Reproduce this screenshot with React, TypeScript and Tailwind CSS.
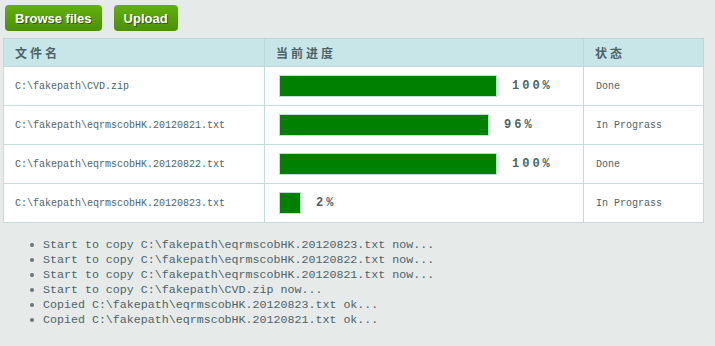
import React from "react";

const rows = [
  { name: "C:\\fakepath\\CVD.zip", w: 218, pct: "100%", status: "Done" },
  { name: "C:\\fakepath\\eqrmscobHK.20120821.txt", w: 210, pct: "96%", status: "In Prograss" },
  { name: "C:\\fakepath\\eqrmscobHK.20120822.txt", w: 218, pct: "100%", status: "Done" },
  { name: "C:\\fakepath\\eqrmscobHK.20120823.txt", w: 22, pct: "2%", status: "In Prograss" },
];

const logs = [
  "Start to copy C:\\fakepath\\eqrmscobHK.20120823.txt now...",
  "Start to copy C:\\fakepath\\eqrmscobHK.20120822.txt now...",
  "Start to copy C:\\fakepath\\eqrmscobHK.20120821.txt now...",
  "Start to copy C:\\fakepath\\CVD.zip now...",
  "Copied C:\\fakepath\\eqrmscobHK.20120823.txt ok...",
  "Copied C:\\fakepath\\eqrmscobHK.20120821.txt ok...",
];

function Btn({ children }: { children: React.ReactNode }) {
  return (
    <button className="h-[26px] px-[10px] rounded-[4px] bg-gradient-to-b from-[#62b010] to-[#4a9200] text-white font-bold text-[13px] [font-family:'Liberation_Sans',Arial,sans-serif] [text-shadow:1px_1px_0_#2f5a00] leading-none">
      {children}
    </button>
  );
}

export default function App() {
  return (
    <div className="w-[715px] h-[346px] bg-[#e6eae8] text-[#4d6468] [font-family:'Liberation_Mono',monospace] overflow-hidden">
      <div className="flex gap-[12px] pl-[5px] pt-[5px]">
        <Btn>Browse files</Btn>
        <Btn>Upload</Btn>
      </div>
      <table className="ml-[3px] mt-[7px] w-[700px] border-collapse table-fixed bg-white">
        <colgroup>
          <col className="w-[261px]" />
          <col className="w-[319px]" />
          <col className="w-[120px]" />
        </colgroup>
        <thead>
          <tr className="h-[28px] bg-[#c8e6e8] text-left">
            {["文件名", "当前进度", "状态"].map((h) => (
              <th
                key={h}
                className="border border-[#bcd8d8] pl-[11px] font-bold text-[12px] tracking-[3px] [font-family:'Noto_Sans_CJK_SC',sans-serif] text-[#4a6468]"
              >
                {h}
              </th>
            ))}
          </tr>
        </thead>
        <tbody>
          {rows.map((r, i) => (
            <tr key={i} className="h-[39px]">
              <td className="border border-[#c4dcda] pl-[11px] text-[10px]">{r.name}</td>
              <td className="border border-[#c4dcda] pl-[14px]">
                <div className="flex items-center">
                  <div
                    className="h-[22px] bg-[#008000] border border-[#c4dcd8]"
                    style={{ width: r.w }}
                  />
                  <span className="ml-[15px] font-bold text-[12px] tracking-[3px]">{r.pct}</span>
                </div>
              </td>
              <td className="border border-[#c4dcda] pl-[12px] text-[10px]">{r.status}</td>
            </tr>
          ))}
        </tbody>
      </table>
      <ul className="mt-[14px] pl-[30px] text-[11.65px] leading-[15px]">
        {logs.map((l, i) => (
          <li key={i} className="flex items-center whitespace-pre">
            <span className="w-[4px] h-[4px] rounded-full bg-[#66777a] mr-[9px]" />
            {l}
          </li>
        ))}
      </ul>
    </div>
  );
}
